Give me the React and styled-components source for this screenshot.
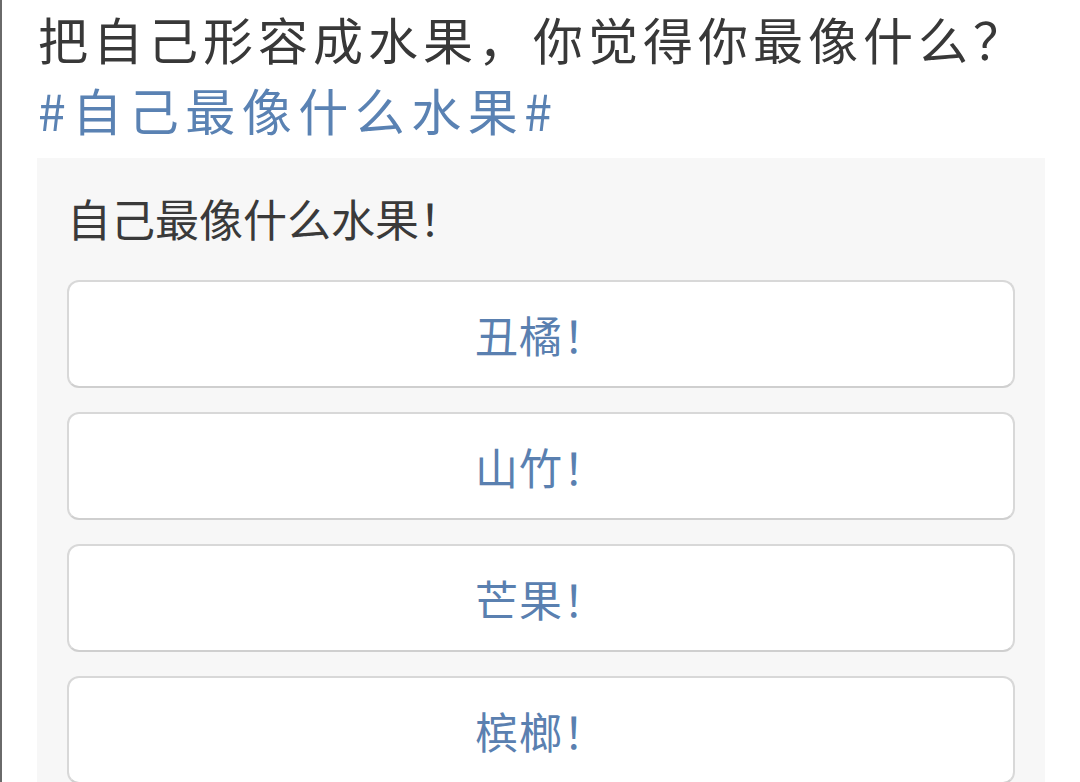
import styled, { createGlobalStyle } from 'styled-components';

const options = ['丑橘！', '山竹！', '芒果！', '槟榔！'];

const GlobalStyle = createGlobalStyle`
  html, body {
    margin: 0;
    padding: 0;
    background: #ffffff;
  }
  body {
    font-family: "Noto Sans CJK SC", "Noto Sans", sans-serif;
    font-weight: 400;
    overflow: hidden;
  }
`;

function App() {
  return (
    <>
      <GlobalStyle />
      <PageUI lang="zh-CN">
        <PostTextUI>
          把自己形容成水果，你觉得你最像什么？
          <br />
          <TopicUI>#自己最像什么水果#</TopicUI>
        </PostTextUI>

        <PollUI>
          <PollTitleUI>自己最像什么水果！</PollTitleUI>
          <OptionListUI>
            {options.map(label => (
              <OptionUI key={label} type="button">
                {label}
              </OptionUI>
            ))}
          </OptionListUI>
        </PollUI>
      </PageUI>
    </>
  );
}

const PageUI = styled.div`
  min-height: 782px;
  box-sizing: border-box;
  border-left: 2px solid #6a6a6a;
  padding: 3px 35px 0 35px;
`;

const PostTextUI = styled.p`
  margin: 0 0 0 1px;
  font-size: 50px;
  line-height: 71px;
  letter-spacing: 5px;
  color: #383838;
  white-space: nowrap;
`;

const TopicUI = styled.span`
  color: #5a82b3;
  letter-spacing: 6.5px;
`;

const PollUI = styled.div`
  margin-top: 13px;
  background: #f7f7f7;
  padding: 30px 30px 30px;
`;

const PollTitleUI = styled.h3`
  margin: 0 0 0 0;
  font-size: 44px;
  font-weight: 400;
  line-height: 60px;
  letter-spacing: 0;
  color: #3a3a3a;
`;

const OptionListUI = styled.div`
  display: flex;
  flex-direction: column;
  gap: 24px;
  margin-top: 32px;
`;

const OptionUI = styled.button`
  height: 108px;
  box-sizing: border-box;
  background: #ffffff;
  border: 2px solid #d8d8d8;
  border-bottom-color: #cfcfcf;
  border-radius: 12px;
  font-family: inherit;
  font-size: 43px;
  font-weight: 400;
  line-height: 1;
  letter-spacing: 1px;
  color: #5a80b0;
  cursor: pointer;
`;

export default App;
